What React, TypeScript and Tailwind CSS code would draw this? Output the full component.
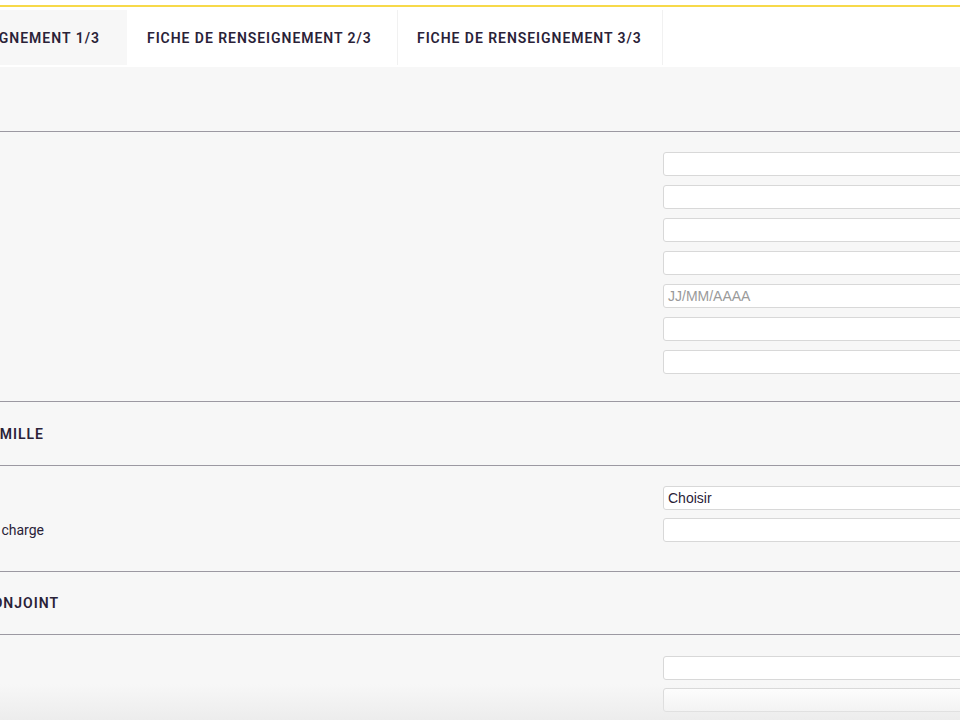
import React from "react";

const tabFont = { fontFamily: "Roboto, 'Liberation Sans', sans-serif" };
const inputFont = { fontFamily: "'Liberation Sans', Arial, sans-serif" };

function Input({ placeholder, value }: { placeholder?: string; value?: string }) {
  return (
    <div
      className="h-[24px] w-[320px] rounded-[3px] border border-[#d8d8d8] bg-white px-[4px] flex items-center text-[14px]"
      style={inputFont}
    >
      {placeholder ? <span className="text-[#9a9a9a]">{placeholder}</span> : null}
      {value ? <span className="text-[#2a2238]">{value}</span> : null}
    </div>
  );
}

function Rule() {
  return <div className="h-px bg-[#9c99a2]" />;
}

function Row({ label, children }: { label?: string; children: React.ReactNode }) {
  return (
    <div className="grid grid-cols-[663px_1fr] items-center">
      <div className="w-[44px] flex justify-end whitespace-nowrap text-[14px] text-[#2a2238]" style={tabFont}>
        {label ?? ""}
      </div>
      {children}
    </div>
  );
}

function SectionTitle({ text, end, h }: { text: string; end: string; h: string }) {
  return (
    <div className={`${h} flex items-center pt-[1px]`}>
      <div
        className={`${end} flex justify-end whitespace-nowrap text-[14px] font-semibold tracking-[1px] text-[#2a2238]`}
        style={tabFont}
      >
        {text}
      </div>
    </div>
  );
}

export default function App() {
  return (
    <div className="relative w-[960px] h-[720px] overflow-hidden bg-[#f7f7f7]">
      <div className="h-[5px] bg-white" />
      <div className="h-[2px] bg-[#f7d94a]" />
      <div className="bg-white pt-[3px] pb-[2px] flex">
        <div
          className="w-[127px] h-[55px] bg-[#f7f7f7] flex items-center justify-end pr-[27px] pt-[2px] whitespace-nowrap text-[14px] font-semibold tracking-[1px] text-[#2a2238]"
          style={tabFont}
        >
          FICHE DE RENSEIGNEMENT 1/3
        </div>
        <div
          className="ml-px w-[270px] h-[55px] bg-white border-r border-[#f1f1f1] flex items-center pl-[19px] pt-[2px] whitespace-nowrap text-[14px] font-semibold tracking-[0.95px] text-[#2a2238]"
          style={tabFont}
        >
          FICHE DE RENSEIGNEMENT 2/3
        </div>
        <div
          className="w-[265px] h-[55px] bg-white border-r border-[#f1f1f1] flex items-center pl-[19px] pt-[2px] whitespace-nowrap text-[14px] font-semibold tracking-[0.95px] text-[#2a2238]"
          style={tabFont}
        >
          FICHE DE RENSEIGNEMENT 3/3
        </div>
      </div>

      <div className="h-[64px]" />
      <Rule />
      <div className="pt-[20px] pb-[27px] flex flex-col gap-[9px]">
        <Row><Input /></Row>
        <Row><Input /></Row>
        <Row><Input /></Row>
        <Row><Input /></Row>
        <Row><Input placeholder="JJ/MM/AAAA" /></Row>
        <Row><Input /></Row>
        <Row><Input /></Row>
      </div>
      <Rule />
      <SectionTitle text="SITUATION DE FAMILLE" end="w-[44px]" h="h-[63px]" />
      <Rule />
      <div className="pt-[20px] pb-[29px] flex flex-col gap-[8px]">
        <Row><Input value="Choisir" /></Row>
        <Row label="Nombre d'enfants à charge"><Input /></Row>
      </div>
      <Rule />
      <SectionTitle text="INFORMATIONS DU CONJOINT" end="w-[59px]" h="h-[62px]" />
      <Rule />
      <div className="pt-[21px] flex flex-col gap-[8px]">
        <Row><Input /></Row>
        <Row><Input /></Row>
      </div>

      <div className="absolute left-0 right-0 bottom-0 h-[36px] bg-gradient-to-b from-transparent to-[#e8e8e8]/70 pointer-events-none" />
    </div>
  );
}
